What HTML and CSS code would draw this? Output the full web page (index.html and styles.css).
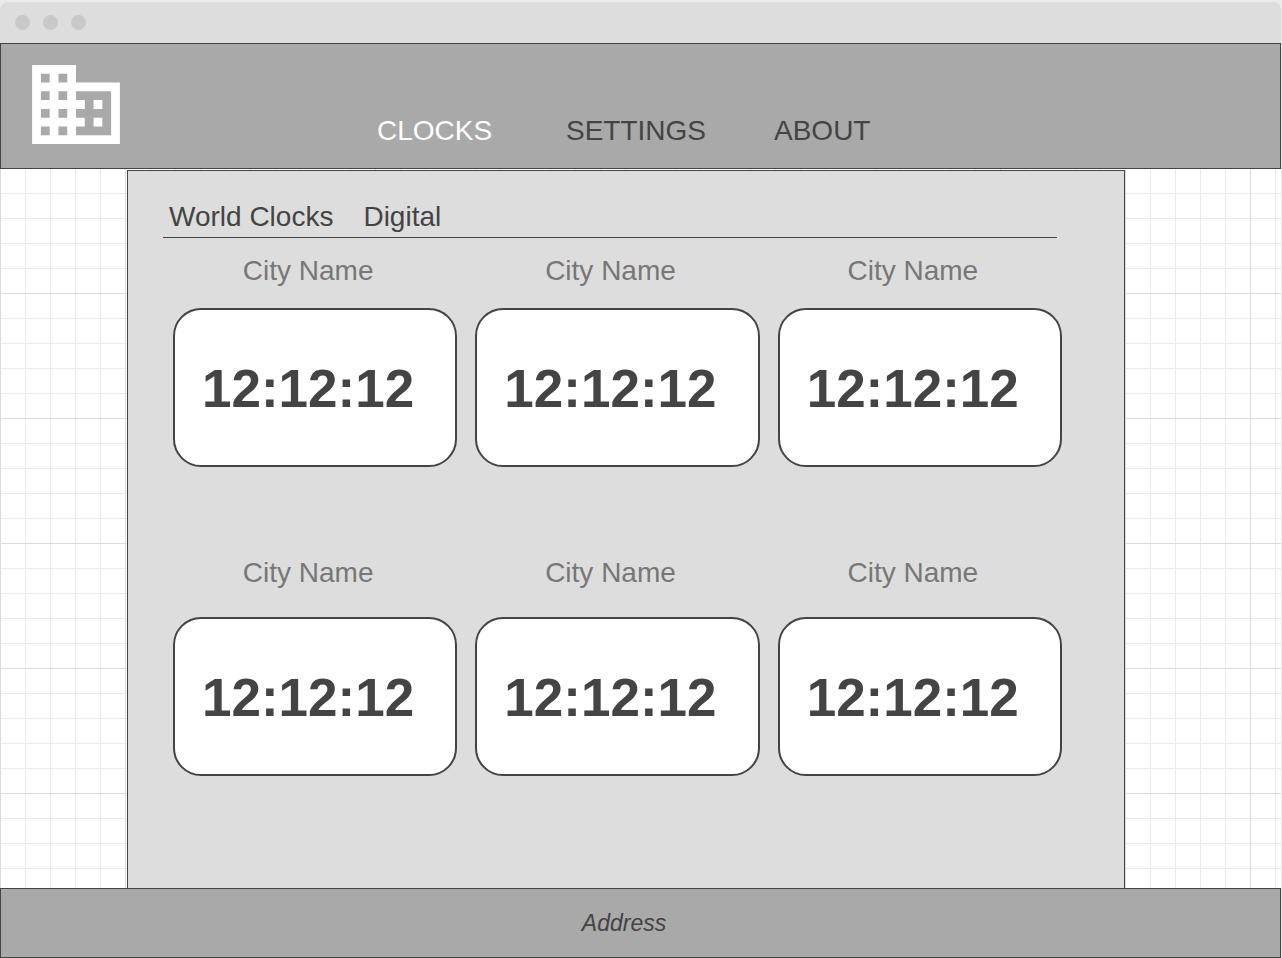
FILE: index.html
```html
<!DOCTYPE html>
<html lang="en">
<head>
<meta charset="utf-8">
<meta name="viewport" content="width=device-width, initial-scale=1">
<title>World Clocks</title>
<link rel="stylesheet" href="styles.css">
</head>
<body>
<div class="window-bar">
  <span class="dot"></span>
  <span class="dot"></span>
  <span class="dot"></span>
</div>
<header class="site-header">
  <svg class="logo" viewBox="2 3 20 18" role="img" aria-label="Home">
    <path fill="currentColor" d="M12 7V3H2v18h20V7H12zM6 19H4v-2h2v2zm0-4H4v-2h2v2zm0-4H4V9h2v2zm0-4H4V5h2v2zm4 12H8v-2h2v2zm0-4H8v-2h2v2zm0-4H8V9h2v2zm0-4H8V5h2v2zm10 12h-8v-2h2v-2h-2v-2h2v-2h-2V9h8v10zm-2-8h-2v2h2v-2zm0 4h-2v2h2v-2z"/>
  </svg>
  <nav class="main-nav">
    <a class="active" href="#clocks">CLOCKS</a>
    <a href="#settings">SETTINGS</a>
    <a href="#about">ABOUT</a>
  </nav>
</header>
<main class="canvas">
  <section class="panel">
    <nav class="tabs">
      <a href="#world">World Clocks</a>
      <a href="#digital">Digital</a>
    </nav>
    <ul class="clocks">
      <li><span class="city">City Name</span><time class="clock">12:12:12</time></li>
      <li><span class="city">City Name</span><time class="clock">12:12:12</time></li>
      <li><span class="city">City Name</span><time class="clock">12:12:12</time></li>
    </ul>
    <ul class="clocks clocks-lower">
      <li><span class="city">City Name</span><time class="clock">12:12:12</time></li>
      <li><span class="city">City Name</span><time class="clock">12:12:12</time></li>
      <li><span class="city">City Name</span><time class="clock">12:12:12</time></li>
    </ul>
  </section>
</main>
<footer class="site-footer">
  <address>Address</address>
</footer>
</body>
</html>
```
FILE: styles.css
```css
* {
  box-sizing: border-box;
}

body {
  display: flex;
  flex-direction: column;
  min-height: 100vh;
  margin: 0;
  padding: 2px 1px 0 0;
  background: #ebebeb;
  color: #444;
  font-family: "Liberation Sans", Arial, sans-serif;
  font-size: 28px;
  line-height: 32px;
}

a {
  color: inherit;
  text-decoration: none;
}

.window-bar {
  display: flex;
  align-items: center;
  gap: 13px;
  height: 41px;
  padding-left: 15px;
  border-radius: 8px 8px 0 0;
  background: #ddd;
}

.dot {
  width: 15px;
  height: 15px;
  border-radius: 50%;
  background: #c9c9c9;
}

.site-header {
  display: flex;
  align-items: flex-start;
  padding: 21px 31px 21px;
  border: 1px solid #444;
  background: #a9a9a9;
}

.logo {
  display: block;
  width: 88px;
  height: 79px;
  color: #fff;
}

.main-nav {
  display: grid;
  grid-template-columns: 189px 208px auto;
  margin: 50px 0 0 257px;
}

.main-nav .active {
  color: #fff;
}

.canvas {
  display: flex;
  flex: 1;
  padding: 1px 156px 0 127px;
  background-color: #fff;
  background-image:
    linear-gradient(to right, #dcdcdc 1px, transparent 1px),
    linear-gradient(to bottom, #dcdcdc 1px, transparent 1px),
    linear-gradient(to right, #ebebeb 1px, transparent 1px),
    linear-gradient(to bottom, #ebebeb 1px, transparent 1px);
  background-size: 125px 125px, 125px 125px, 25px 25px, 25px 25px;
  background-position: 0 -1px;
}

.panel {
  flex: 1;
  padding: 30px 67px 0 35px;
  border: 1px solid #444;
  border-bottom: 0;
  background: #ddd;
}

.tabs {
  display: flex;
  gap: 30px;
  padding: 0 6px 4px;
  border-bottom: 1px solid #444;
}

.clocks {
  display: grid;
  grid-template-columns: repeat(3, 1fr);
  gap: 18px;
  margin: 17px -5px 0 10px;
  padding: 0;
  list-style: none;
}

.clocks-lower {
  margin-top: 90px;
}

.city {
  display: block;
  margin-bottom: 21px;
  padding-right: 14px;
  color: #777;
  line-height: 32px;
  text-align: center;
}

.clocks-lower .city {
  margin-bottom: 28px;
}

.clock {
  display: flex;
  align-items: center;
  height: 159px;
  padding: 2px 0 0 27px;
  border: 2px solid #444;
  border-radius: 28px;
  background: #fff;
  font-size: 53px;
  font-weight: bold;
  line-height: 60px;
}

.site-footer {
  padding: 20px 33px 20px 0;
  border: 1px solid #444;
  background: #a9a9a9;
  font-size: 23px;
  line-height: 28px;
  text-align: center;
}
```
